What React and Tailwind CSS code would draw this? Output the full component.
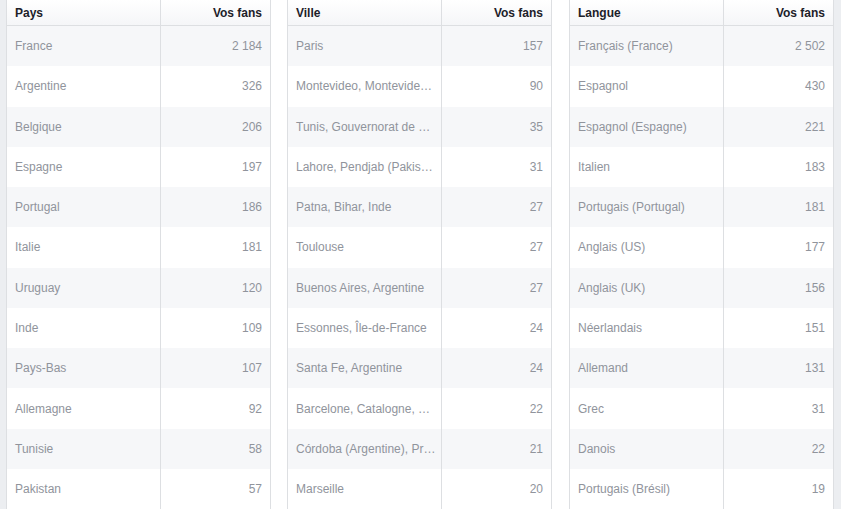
import React from "react";

const tables = [
  {
    title: "Pays",
    rows: [
      ["France", "2 184"],
      ["Argentine", "326"],
      ["Belgique", "206"],
      ["Espagne", "197"],
      ["Portugal", "186"],
      ["Italie", "181"],
      ["Uruguay", "120"],
      ["Inde", "109"],
      ["Pays-Bas", "107"],
      ["Allemagne", "92"],
      ["Tunisie", "58"],
      ["Pakistan", "57"],
    ],
  },
  {
    title: "Ville",
    rows: [
      ["Paris", "157"],
      ["Montevideo, Montevide…", "90"],
      ["Tunis, Gouvernorat de …", "35"],
      ["Lahore, Pendjab (Pakis…", "31"],
      ["Patna, Bihar, Inde", "27"],
      ["Toulouse", "27"],
      ["Buenos Aires, Argentine", "27"],
      ["Essonnes, Île-de-France", "24"],
      ["Santa Fe, Argentine", "24"],
      ["Barcelone, Catalogne, …", "22"],
      ["Córdoba (Argentine), Pr…", "21"],
      ["Marseille", "20"],
    ],
  },
  {
    title: "Langue",
    rows: [
      ["Français (France)", "2 502"],
      ["Espagnol", "430"],
      ["Espagnol (Espagne)", "221"],
      ["Italien", "183"],
      ["Portugais (Portugal)", "181"],
      ["Anglais (US)", "177"],
      ["Anglais (UK)", "156"],
      ["Néerlandais", "151"],
      ["Allemand", "131"],
      ["Grec", "31"],
      ["Danois", "22"],
      ["Portugais (Brésil)", "19"],
    ],
  },
];

function Table({ title, rows, className }) {
  return (
    <div className={`w-[265px] shrink-0 border-x border-[#dddfe2] bg-white ${className}`}>
      <div className="flex h-[26px] border-b border-[#dddfe2] bg-gradient-to-b from-white to-[#f5f6f8] text-[12px] font-bold text-[#1d2129]">
        <div className="flex w-[154px] items-center border-r border-[#dddfe2] pl-[8px]">{title}</div>
        <div className="flex flex-1 items-center justify-end pr-[8px]">Vos fans</div>
      </div>
      {rows.map(([name, val], i) => (
        <div
          key={i}
          className={`flex h-[40.27px] text-[12px] text-[#90949c] ${i % 2 === 0 ? "bg-[#f6f7f9]" : "bg-white"}`}
        >
          <div className="flex w-[154px] items-center overflow-hidden whitespace-nowrap border-r border-[#dddfe2] pl-[8px] pr-[6px]">
            {name}
          </div>
          <div className="flex flex-1 items-center justify-end pr-[8px]">{val}</div>
        </div>
      ))}
    </div>
  );
}

export default function App() {
  return (
    <div
      className="flex h-[509px] w-[841px] overflow-hidden bg-[#eceef1]"
      style={{ fontFamily: '"Liberation Sans", Arial, Helvetica, sans-serif' }}
    >
      <div className="ml-[6px] flex w-[828px] bg-white">
        <Table {...tables[0]} className="" />
        <Table {...tables[1]} className="ml-[16px]" />
        <Table {...tables[2]} className="ml-[17px]" />
      </div>
    </div>
  );
}
